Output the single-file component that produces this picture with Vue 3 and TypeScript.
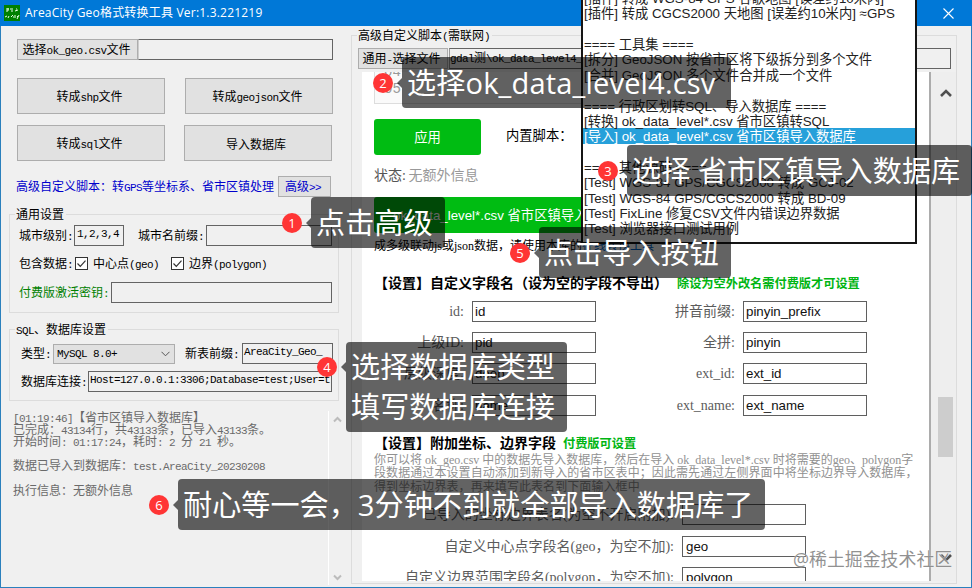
<script setup lang="ts">
import { h, type FunctionalComponent } from 'vue'

/** Bitmap-style text: full-width CJK with exactly half-width Latin runs. */
const Song: FunctionalComponent<{ t: string }> = (props) =>
  h(
    'span',
    { class: 'song' },
    props.t
      .split(/([\x20-\x7e]+)/)
      .filter((s) => s !== '')
      .map((s) => h('span', { class: /^[\x20-\x7e]/.test(s) ? 'half' : 'full' }, s)),
  )
Song.props = ['t']

const log: string[] = [
  '[01:19:46]【省市区镇导入数据库】',
  '已完成：43134行，共43133条，已导入43133条。',
  '开始时间: 01:17:24，耗时: 2 分 21 秒。',
  '',
  '数据已导入到数据库：test.AreaCity_20230208',
  '',
  '执行信息：无额外信息',
]

interface Option { text: string; active?: boolean }
const options: Option[] = [
  { text: '[插件] 转成 WGS-84 GPS 谷歌地图 [误差约10米内]' },
  { text: '[插件] 转成 CGCS2000 天地图 [误差约10米内] ≈GPS' },
  { text: '' },
  { text: '==== 工具集 ====' },
  { text: '[拆分] GeoJSON 按省市区将下级拆分到多个文件' },
  { text: '[合并] GeoJSON 多个文件合并成一个文件' },
  { text: '' },
  { text: '==== 行政区划转SQL、导入数据库 ====' },
  { text: '[转换] ok_data_level*.csv 省市区镇转SQL' },
  { text: '[导入] ok_data_level*.csv 省市区镇导入数据库', active: true },
  { text: '' },
  { text: '==== 其他源码 ====' },
  { text: '[Test] WGS-84 GPS/CGCS2000 转成 GCJ-02' },
  { text: '[Test] WGS-84 GPS/CGCS2000 转成 BD-09' },
  { text: '[Test] FixLine 修复CSV文件内错误边界数据' },
  { text: '[Test] 浏览器接口测试用例' },
]

const fields: [string, string, string, string][] = [
  ['id:', 'id', '拼音前缀:', 'pinyin_prefix'],
  ['上级ID:', 'pid', '全拼:', 'pinyin'],
  ['层级深度:', 'deep', 'ext_id:', 'ext_id'],
  ['名称:', 'name', 'ext_name:', 'ext_name'],
]
const extra: [string, string][] = [
  ['已导入的坐标边界表名(为空不开启附加):', ''],
  ['自定义中心点字段名(geo，为空不加):', 'geo'],
  ['自定义边界范围字段名(polygon，为空不加):', 'polygon'],
]

interface Callout { n: number; lines: string[] }
const callouts: Callout[] = [
  { n: 1, lines: ['点击高级'] },
  { n: 2, lines: ['选择ok_data_level4.csv'] },
  { n: 3, lines: ['选择 省市区镇导入数据库'] },
  { n: 4, lines: ['选择数据库类型', '填写数据库连接'] },
  { n: 5, lines: ['点击导入按钮'] },
  { n: 6, lines: ['耐心等一会，3分钟不到就全部导入数据库了'] },
]
</script>

<template>
  <div class="window">
    <header class="titlebar">
      <svg class="logo" width="16" height="16" viewBox="0 0 16 16">
        <rect width="16" height="16" fill="#008000" />
        <path d="M2 4h3M2 6h2M4 3v3M6 4h3M7 6h2M11 6l3-1M12 4h1M1 12l2-1M4 13l1-2M7 12l2-2M9 12h1M11 10v3M13 11l1 1 1-2M14 12l-1 2" stroke="#e8ffe8" stroke-width="1" fill="none" />
      </svg>
      <span class="caption">AreaCity Geo格式转换工具 Ver:1.3.221219</span>
      <svg class="close" width="11" height="11" viewBox="0 0 11 11"><path d="M.5.5l10 10M10.5.5l-10 10" stroke="#fff" stroke-width="1.1" /></svg>
    </header>

    <div class="body">
      <section class="left">
        <div class="file-row">
          <button class="btn pick"><Song t="选择ok_geo.csv文件" /></button>
          <div class="box grow"></div>
        </div>
        <div class="pair"><button class="btn big"><Song t="转成shp文件" /></button><button class="btn big"><Song t="转成geojson文件" /></button></div>
        <div class="pair second"><button class="btn big"><Song t="转成sql文件" /></button><button class="btn big narrow"><Song t="导入数据库" /></button></div>
        <div class="advanced">
          <Song t="高级自定义脚本：转GPS等坐标系、省市区镇处理" />
          <button class="btn adv"><Song t="高级>>" /></button>
        </div>

        <fieldset class="group general">
          <legend><Song t="通用设置" /></legend>
          <div class="row r1">
            <Song t="城市级别:" /><div class="box level"><Song t="1,2,3,4" /></div>
            <Song class="prefix" t="城市名前缀:" /><div class="box grow"></div>
          </div>
          <div class="row r2">
            <Song t="包含数据:" />
            <svg class="check" width="13" height="13" viewBox="0 0 13 13"><rect x=".5" y=".5" width="12" height="12" fill="#fff" stroke="#333" /><path d="M2.5 6.5l2.8 2.8 5.2-5.6" fill="none" stroke="#333" stroke-width="1.2" /></svg>
            <Song class="point" t="中心点(geo)" />
            <svg class="check" width="13" height="13" viewBox="0 0 13 13"><rect x=".5" y=".5" width="12" height="12" fill="#fff" stroke="#333" /><path d="M2.5 6.5l2.8 2.8 5.2-5.6" fill="none" stroke="#333" stroke-width="1.2" /></svg>
            <Song t="边界(polygon)" />
          </div>
          <div class="row r3"><Song class="paid" t="付费版激活密钥:" /><div class="box grow"></div></div>
        </fieldset>

        <fieldset class="group database">
          <legend><Song t="SQL、数据库设置" /></legend>
          <div class="row d1">
            <Song t="类型:" />
            <div class="select"><Song t="MySQL 8.0+" /><svg width="9" height="6" viewBox="0 0 9 6"><path d="M.5.8l4 4 4-4" fill="none" stroke="#555" /></svg></div>
            <Song t="新表前缀:" /><div class="box table"><Song t="AreaCity_Geo_" /></div>
          </div>
          <div class="row d2"><Song t="数据库连接:" /><div class="box conn"><Song t="Host=127.0.0.1:3306;Database=test;User=t" /></div></div>
        </fieldset>

        <div class="log">
          <div class="log-text"><div v-for="(l, i) in log" :key="i" class="log-line"><Song :t="l" /></div></div>
          <div class="log-bar">
            <svg width="9" height="7" viewBox="0 0 9 7"><path d="M1 5.5l3.5-3.5L8 5.5" fill="none" stroke="#bcbcbc" stroke-width="2" /></svg>
            <svg width="9" height="7" viewBox="0 0 9 7"><path d="M1 1.5L4.500 5 8 1.500" fill="none" stroke="#bcbcbc" stroke-width="2" /></svg>
          </div>
        </div>
      </section>

      <fieldset class="group right">
        <legend><Song t="高级自定义脚本(需联网)" /></legend>
        <div class="script-row">
          <button class="btn general-pick"><Song t="通用-选择文件" /></button>
          <div class="box grow path"><Song t="gdal测\ok_data_level4_" /></div>
        </div>
        <div class="browser">
          <div class="page">
            <div class="code"><span>04</span><span>05</span></div>
            <div class="apply-row"><div class="green apply">应用</div><span class="builtin">内置脚本：</span></div>
            <div class="status">状态: <span>无额外信息</span></div>
            <div class="green import">ok_data_level*.csv 省市区镇导入数据库</div>
            <div class="tip">成多级联动js或json数据，请使用本库的<a>在线转换工具</a></div>
            <div class="heading h1">【设置】自定义字段名（设为空的字段不导出）<em>除设为空外改名需付费版才可设置</em></div>
            <div class="fields">
              <template v-for="f in fields" :key="f[1]">
                <label>{{ f[0] }}</label><div class="field">{{ f[1] }}</div>
                <label>{{ f[2] }}</label><div class="field">{{ f[3] }}</div>
              </template>
            </div>
            <div class="heading h2">【设置】附加坐标、边界字段<em>付费版可设置</em></div>
            <div class="note">
              <div class="n1">你可以将 ok_geo.csv 中的数据先导入数据库，然后在导入 ok_data_level*.csv 时将需要的geo、polygon字</div>
              <div>段数据通过本设置自动添加到新导入的省市区表中；因此需先通过左侧界面中将坐标边界导入数据库，</div>
              <div>得到坐标边界表，再来填写此表名到下面输入框中</div>
            </div>
            <div class="extras">
              <template v-for="e in extra" :key="e[0]"><label>{{ e[0] }}</label><div class="field">{{ e[1] }}</div></template>
            </div>
          </div>
          <div class="vbar">
            <svg width="12" height="8" viewBox="0 0 12 8"><path d="M1 7l5-5 5 5" fill="none" stroke="#505050" stroke-width="2.6" /></svg>
            <div class="thumb"></div>
            <svg class="down" width="12" height="8" viewBox="0 0 12 8"><path d="M1 1l5 5 5-5" fill="none" stroke="#505050" stroke-width="2.6" /></svg>
          </div>
        </div>
      </fieldset>
    </div>

    <div class="popup">
      <div v-for="(o, i) in options" :key="i" class="option" :class="{ active: o.active }">{{ o.text }}</div>
    </div>

    <div v-for="c in callouts" :key="c.n" class="callout" :class="'c' + c.n">
      <span class="badge">{{ c.n }}</span>
      <div class="bubble"><div v-for="l in c.lines" :key="l">{{ l }}</div></div>
    </div>

    <div class="watermark">@稀土掘金技术社区</div>
  </div>
</template>

<style>
body { margin: 0; overflow: hidden; }
</style>

<style scoped>
* { box-sizing: border-box; }
.window {
  position: relative; width: 972px; height: 588px; overflow: hidden;
  display: flex; flex-direction: column; background: #f0f0f0; color: #000;
  font-family: "Liberation Serif", "Noto Sans CJK SC", serif; font-size: 12px; white-space: nowrap;
}
.titlebar { height: 26px; flex: none; background: #0078d7; display: flex; align-items: center; padding: 0 18px 0 4px; color: #fff; }
.caption { margin-left: 5px; flex: 1; font: 12px/26px "Open Sans", "Noto Sans CJK SC", sans-serif; letter-spacing: .2px; }
.body { flex: 1; min-height: 0; display: flex; border: solid #2a80bd; border-width: 0 1px 1px; padding-bottom: 1px; }

.song { display: inline-flex; align-items: baseline; padding-top: 1px; font: 12px/14px "Noto Sans CJK SC", sans-serif; white-space: pre; flex: none; }
:deep(.half) { font: 11px/14px "Liberation Mono", monospace; letter-spacing: -.6px; }
:deep(.full) { font: 12px/14px "Noto Sans CJK SC", sans-serif; }

.btn { margin: 0; padding: 1px 0 0; border: 1px solid #adadad; background: #e1e1e1; display: flex; align-items: center; justify-content: center; color: inherit; flex: none; }
.box { height: 21px; border: 1px solid #646464; overflow: hidden; padding: 0 0 0 2px; flex: none; }
.box.grow { flex: 1; }
.left { width: 350px; flex: none; display: flex; flex-direction: column; padding: 13px 0 0 16px; }
.file-row { display: flex; width: 316px; height: 21px; }
.pick { width: 121px; padding: 0 2px 0 0; }
.file-row .box { border-left-color: #ccc; }
.pair { display: flex; justify-content: space-between; width: 316px; height: 36px; margin-top: 18px; }
.pair.second { width: 315px; margin-top: 11px; }
.big { width: 148px; padding-right: 3px; }
.narrow { padding-right: 4px; }
.advanced { display: flex; align-items: center; height: 22px; margin: 14px 0 0 -1px; color: #00c; }
.adv { width: 53px; height: 21px; margin-left: 4px; padding: 0 3px 0 0; }

.group { margin: 0; padding: 0; min-width: 0; border: 1px solid #dcdcdc; }
.group legend { margin-left: 5px; padding: 0 2px 0 1px; height: 14px; line-height: 14px; display: flex; }
.group legend .song { padding: 0; }
.general { width: 330px; height: 106px; margin: 10px 0 0 -8px; }
.row { display: flex; align-items: center; }
.r1 { margin: 4px 6px 0 9px; height: 21px; }
.level { width: 50px; margin-left: 1px; }
.prefix { margin: 0 2px 0 14px; }
.r2 { margin: 9px 0 0 9px; height: 16px; }
.check { margin: 0 5px 0 2px; }
.point { margin-right: 10px; }
.r3 { margin: 11px 6px 0 9px; height: 21px; }
.paid { color: #008000; margin-right: 2px; }
.database { width: 330px; height: 79px; margin: 9px 0 0 -8px; }
.d1 { margin: 7px 0 0 11px; height: 21px; }
.select { width: 122px; height: 20px; margin: 0 10px 0 2px; padding: 0 4px 0 3px; border: 1px solid #adadad; background: #e1e1e1; display: flex; align-items: center; justify-content: space-between; }
.table { width: 91px; margin-left: 3px; padding-left: 1px; }
.d2 { margin: 7px 0 0 11px; height: 21px; }
.conn { width: 244px; margin-left: 1px; padding-left: 1px; }
.log { flex: 1; display: flex; margin: 10px 0 1px -4px; color: #6a6a6a; }
.log-text { width: 315px; }
.log-line { height: 12px; display: flex; align-items: center; }
.log-bar { width: 18px; border-left: 1px solid #fff; display: flex; flex-direction: column; justify-content: space-between; align-items: center; padding: 5px 0 4px; }

.right { width: 606px; height: 556px; margin-top: 2px; flex: none; }
.script-row { display: flex; margin: 6px 5px 0 6px; height: 21px; }
.general-pick { width: 90px; padding: 0 3px 0 0; }
.path { margin-left: 1px; padding: 0; border-left-color: #999; }
.browser { display: flex; height: 509px; margin: 3px 0 0 10px; }
.page { width: 569px; background: #fff; border-right: 2px solid #acacac; padding-left: 12px; overflow: hidden; font-size: 14px; }
.code { width: 500px; height: 32px; border: 1px solid #ddd; border-top: 0; background: #fafafa; color: #999; padding-left: 9px; overflow: hidden; display: flex; flex-direction: column; font: 14px/17px "Liberation Mono", monospace; }
.code span:first-child { margin-top: -8px; }
.code span { flex: none; }
.apply-row { display: flex; align-items: center; margin-top: 15px; height: 36px; }
.green { background: #00bc12; color: #fff; border-radius: 3px; font-family: "Liberation Sans", "Noto Sans CJK SC", sans-serif; }
.apply { width: 107px; height: 36px; line-height: 37px; font-size: 13.300px; text-align: center; }
.builtin { margin-left: 25px; font-size: 13.300px; line-height: 20px; margin-top: -3px; }
.status { margin-top: 10px; height: 20px; line-height: 21px; color: #555; }
.status span { color: #999; margin-left: -1px; }
.import { margin-top: 12px; width: 250px; height: 36px; line-height: 38px; padding-left: 19px; overflow: hidden; font-size: 13.3px; }
.tip { height: 26px; line-height: 27px; font-size: 12px; }
.tip a { color: #06c; }
.heading { font-weight: bold; display: flex; align-items: baseline; }
.heading em { font-style: normal; font-size: 12.200px; color: #00b512; }
.h1 { height: 36px; line-height: 37px; margin-top: 6px; }
.h1 em { margin-left: 9px; }
.fields { display: grid; grid-template-columns: 90px 124px 132px 124px; column-gap: 8px; grid-template-rows: repeat(4, 31.200px); }
.fields .field:nth-child(4n) { margin-left: -1px; margin-right: 1px; }
label { text-align: right; color: #5c5c5c; line-height: 21px; height: 21px; font-size: 14px; }
.fields label:nth-child(4n + 3) { padding-right: 1px; }
.field { height: 21px; border: 1px solid #5f5f5f; font: 13.300px/19px "Liberation Sans", sans-serif; color: #111; padding-left: 2px; }
.h2 { height: 24px; line-height: 25px; margin-top: 5px; }
.h2 em { margin-left: 7px; }
.note { height: 41px; margin-top: -1px; color: #919191; font-size: 12px; line-height: 13.500px; letter-spacing: .08px; }
.n1 { letter-spacing: 0; }
.extras { display: grid; grid-template-columns: 300px 124px; column-gap: 8px; grid-template-rows: 32px 31px 31px; margin-top: 9px; }
.extras .field { padding-left: 3px; }
.vbar { flex: 1; display: flex; flex-direction: column; align-items: center; padding-top: 17px; background: #eee; }
.thumb { width: 15px; height: 60px; margin: 300px 0 97px 4px; background: #cdcdcd; }
.vbar svg { margin-left: 4px; }

.popup { position: absolute; left: 581px; top: 0; width: 336px; height: 244px; border: 2px solid #151515; border-top: 0; background: #fff; overflow: hidden; font: 13.300px/17px "Liberation Sans", "Noto Sans CJK SC", sans-serif; color: #222; }
.option { height: 15.360px; padding-left: 1px; white-space: pre; }
.option:first-child { margin-top: -10.000px; }
.option.active { background: #26a0da; color: #fff; }

.callout { position: absolute; display: flex; align-items: center; }
.badge { width: 20px; height: 20px; border-radius: 50%; background: #ff3535; color: #fff; text-align: center; font: 13px/20px "Open Sans", sans-serif; z-index: 1; }
.bubble { position: relative; margin-left: 9px; padding: 6px 0 5px 5px; border-radius: 4px; background: rgba(0, 0, 0, .61); color: #fff; font: 29.100px/40px "Open Sans", "Noto Sans CJK SC", sans-serif; letter-spacing: .05px; }
.bubble::before { content: ""; position: absolute; left: -5px; top: 50%; margin-top: -5px; border: 5px solid transparent; border-left: 0; border-right-color: rgba(0, 0, 0, .61); }
.c1 { left: 282px; top: 197px; } .c1 .bubble { width: 134px; }
.c2 { left: 373px; top: 57px; } .c2 .bubble { width: 329px; letter-spacing: .15px; }
.c3 { left: 598px; top: 145px; } .c3 .bubble { width: 345px; }
.c4 { left: 317px; top: 342px; align-items: flex-start; } .c4 .bubble { width: 221px; line-height: 39.500px; }
.c4 .badge { margin-top: 15px; } .c4 .bubble::before { top: 25px; }
.c5 { left: 510px; top: 227px; } .c5 .bubble { width: 192px; }
.c6 { left: 149px; top: 479px; } .c6 .bubble { width: 587px; }
.watermark { position: absolute; left: 793px; top: 546px; font: 17.900px/26px "Open Sans", "Noto Sans CJK SC", sans-serif; color: rgba(125, 125, 125, .85); text-shadow: 0 0 1px #fff; }
</style>
